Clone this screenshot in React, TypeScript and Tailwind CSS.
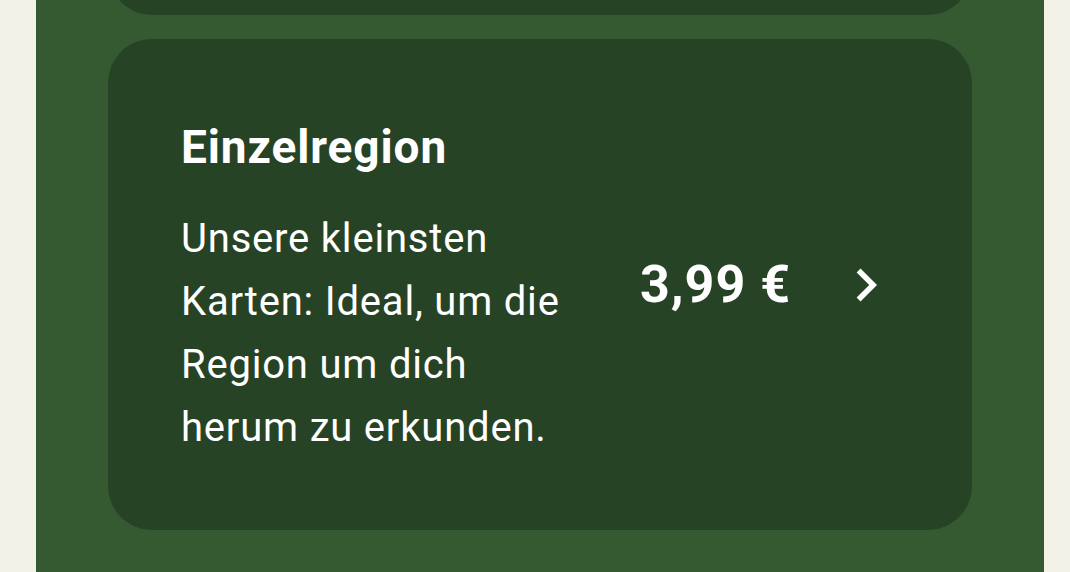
export default function App() {
  return (
    <div className="h-[572px] w-[1070px] overflow-hidden bg-[#f3f2e8] font-['Roboto',sans-serif] text-white">
      <div className="ml-[36px] flex h-full w-[1008px] flex-col gap-[24px] overflow-hidden bg-[#355a32] px-[72px]">
        {/* previous card, only its bottom edge shows */}
        <div className="-mt-[85px] h-[100px] shrink-0 rounded-[44px] bg-[#274325]" />

        {/* Einzelregion */}
        <div className="flex shrink-0 items-center rounded-[44px] bg-[#274325] px-[73px]">
          <div className="flex-1 pb-[71px] pt-[82px]">
            <h2 className="text-[46px] font-bold leading-[52px] tracking-[0.9px]">Einzelregion</h2>
            <p className="mt-[34px] w-[390px] text-[40px] leading-[63px] tracking-[0.8px]">
              Unsere kleinsten Karten: Ideal, um die Region um dich herum zu erkunden.
            </p>
          </div>
          <span className="text-[52px] font-bold leading-none tracking-[1px]">3,99 €</span>
          <svg viewBox="0 0 24 24" className="ml-[42px] h-[66px] w-[66px] fill-white">
            <path d="M10 6L8.59 7.41 13.17 12l-4.58 4.59L10 18l6-6z" />
          </svg>
        </div>
      </div>
    </div>
  );
}
